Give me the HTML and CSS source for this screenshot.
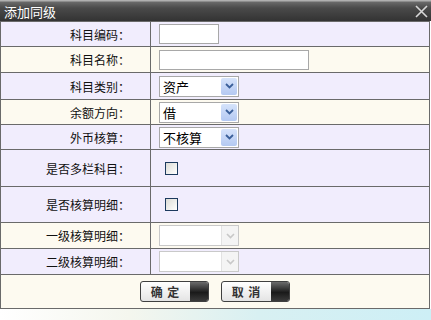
FILE: index.html
```html
<!DOCTYPE html>
<html>
<head>
<meta charset="utf-8">
<link rel="stylesheet" href="styles.css">
</head>
<body>
<div class="dialog">
  <div class="titlebar">
    <span class="title">添加同级</span>
    <svg class="close" width="13" height="13" viewBox="0 0 13 13"><path d="M1 1 L12 12 M12 1 L1 12" stroke="#d8d8d8" stroke-width="1.6"/></svg>
  </div>
  <table class="form">
    <tr class="r1 lav"><td class="lbl">科目编码：</td><td class="val"><input class="txt short" type="text"></td></tr>
    <tr class="r2 cream"><td class="lbl">科目名称：</td><td class="val"><input class="txt long" type="text"></td></tr>
    <tr class="r3 lav"><td class="lbl">科目类别：</td><td class="val"><div class="sel"><span class="stext">资产</span><span class="sbtn"><svg width="9" height="6" viewBox="0 0 9 6"><path d="M1 1 L4.5 4.5 L8 1" fill="none" stroke="#3a5f9a" stroke-width="1.8"/></svg></span></div></td></tr>
    <tr class="r4 cream"><td class="lbl">余额方向：</td><td class="val"><div class="sel"><span class="stext">借</span><span class="sbtn"><svg width="9" height="6" viewBox="0 0 9 6"><path d="M1 1 L4.5 4.5 L8 1" fill="none" stroke="#3a5f9a" stroke-width="1.8"/></svg></span></div></td></tr>
    <tr class="r5 lav"><td class="lbl">外币核算：</td><td class="val"><div class="sel"><span class="stext">不核算</span><span class="sbtn"><svg width="9" height="6" viewBox="0 0 9 6"><path d="M1 1 L4.5 4.5 L8 1" fill="none" stroke="#3a5f9a" stroke-width="1.8"/></svg></span></div></td></tr>
    <tr class="r6 lav"><td class="lbl">是否多栏科目：</td><td class="val"><span class="chk"></span></td></tr>
    <tr class="r7 lav"><td class="lbl">是否核算明细：</td><td class="val"><span class="chk"></span></td></tr>
    <tr class="r8 cream"><td class="lbl">一级核算明细：</td><td class="val"><div class="sel dis"><span class="stext"></span><span class="sbtn"><svg width="9" height="6" viewBox="0 0 9 6"><path d="M1 1 L4.5 4.5 L8 1" fill="none" stroke="#c8c8c8" stroke-width="1.6"/></svg></span></div></td></tr>
    <tr class="r9 lav"><td class="lbl">二级核算明细：</td><td class="val"><div class="sel dis"><span class="stext"></span><span class="sbtn"><svg width="9" height="6" viewBox="0 0 9 6"><path d="M1 1 L4.5 4.5 L8 1" fill="none" stroke="#c8c8c8" stroke-width="1.6"/></svg></span></div></td></tr>
    <tr class="r10 cream"><td class="btns" colspan="2"><span class="btn"><span class="btxt">确 定</span><span class="bdark"></span></span><span class="btn"><span class="btxt">取 消</span><span class="bdark"></span></span></td></tr>
  </table>
  <div class="footer"></div>
</div>
</body>
</html>
```
FILE: styles.css
```css
html, body { margin: 0; padding: 0; background: #ffffff; }
body { font-family: "Noto Sans CJK SC", "Noto Sans", sans-serif; font-size: 12px; color: #000; width: 431px; height: 320px; overflow: hidden; }
.dialog { width: 431px; }
.titlebar {
  height: 21px; box-sizing: border-box;
  background: linear-gradient(#b0b0b0 0px, #b0b0b0 1px, #6a6a6a 2px, #4a4a4a 8px, #333333 21px);
  display: flex; align-items: center; justify-content: space-between;
  padding: 0 3px 0 4px;
}
.title { color: #ffffff; font-size: 13px; line-height: 21px; padding-top: 1px; }
.close { margin-top: 2px; }
.form { border-collapse: collapse; width: 430px; table-layout: fixed; }
.form td { border: 1px solid #6a6a6a; padding: 0; }
.lav td { background: #f1edfd; }
.cream td { background: #fdfaf0; }
.lbl { width: 150px; box-sizing: border-box; text-align: right; padding-right: 20px !important; font-size: 12px; color: #111; }
.val { padding-left: 8px !important; }
.r1 td { height: 24px; }
.r2 td { height: 25px; }
.r3 td { height: 26px; }
.r4 td { height: 24px; }
.r5 td { height: 24px; }
.r6 td { height: 36px; }
.r7 td { height: 35px; }
.r8 td { height: 25px; }
.r9 td { height: 25px; }
.r10 td { height: 33px; }
.txt { display: block; box-sizing: border-box; height: 20px; border: 1px solid #a8a8a8; background: #fff; margin: 0; padding: 0; }
.short { width: 60px; }
.long { width: 150px; }
.sel { display: flex; width: 80px; height: 21px; box-sizing: border-box; border: 1px solid #a8a8a8; background: #fff; align-items: stretch; }
.stext { flex: 1; line-height: 19px; padding-left: 3px; font-size: 13px; color: #000; }
.sbtn { width: 16px; margin: 1px; background: linear-gradient(#d6e3fb, #b4c9f2); border-radius: 2px; display: flex; align-items: center; justify-content: center; }
.dis { border-color: #c9c9c9; }
.dis .sbtn { background: #f4f4f4; border-left: 1px solid #e2e2e2; margin: 0; border-radius: 0; }
.chk { display: block; width: 11px; height: 11px; border: 1px solid #1c3a5e; background: linear-gradient(135deg, #dcdcd6, #ffffff); margin-left: 6px; }
.btns { text-align: left; padding-left: 139px !important; }
.btn { display: inline-flex; width: 69px; height: 21px; box-sizing: border-box; border: 1px solid #404040; border-radius: 3px; overflow: hidden; vertical-align: middle; margin-right: 12px; background: linear-gradient(#ffffff, #e4e4e4); }
.btxt { flex: 1; text-align: center; line-height: 19px; font-size: 12px; font-weight: bold; color: #333; letter-spacing: 1px; }
.bdark { width: 18px; background: linear-gradient(#6c6c6c, #1a1a1a 55%, #3a3a3a); }
.footer { height: 12px; background: linear-gradient(90deg, #ffffff 0%, #f4f6ee 30%, #d8f0f2 60%, #cdeff6 100%); }
```
